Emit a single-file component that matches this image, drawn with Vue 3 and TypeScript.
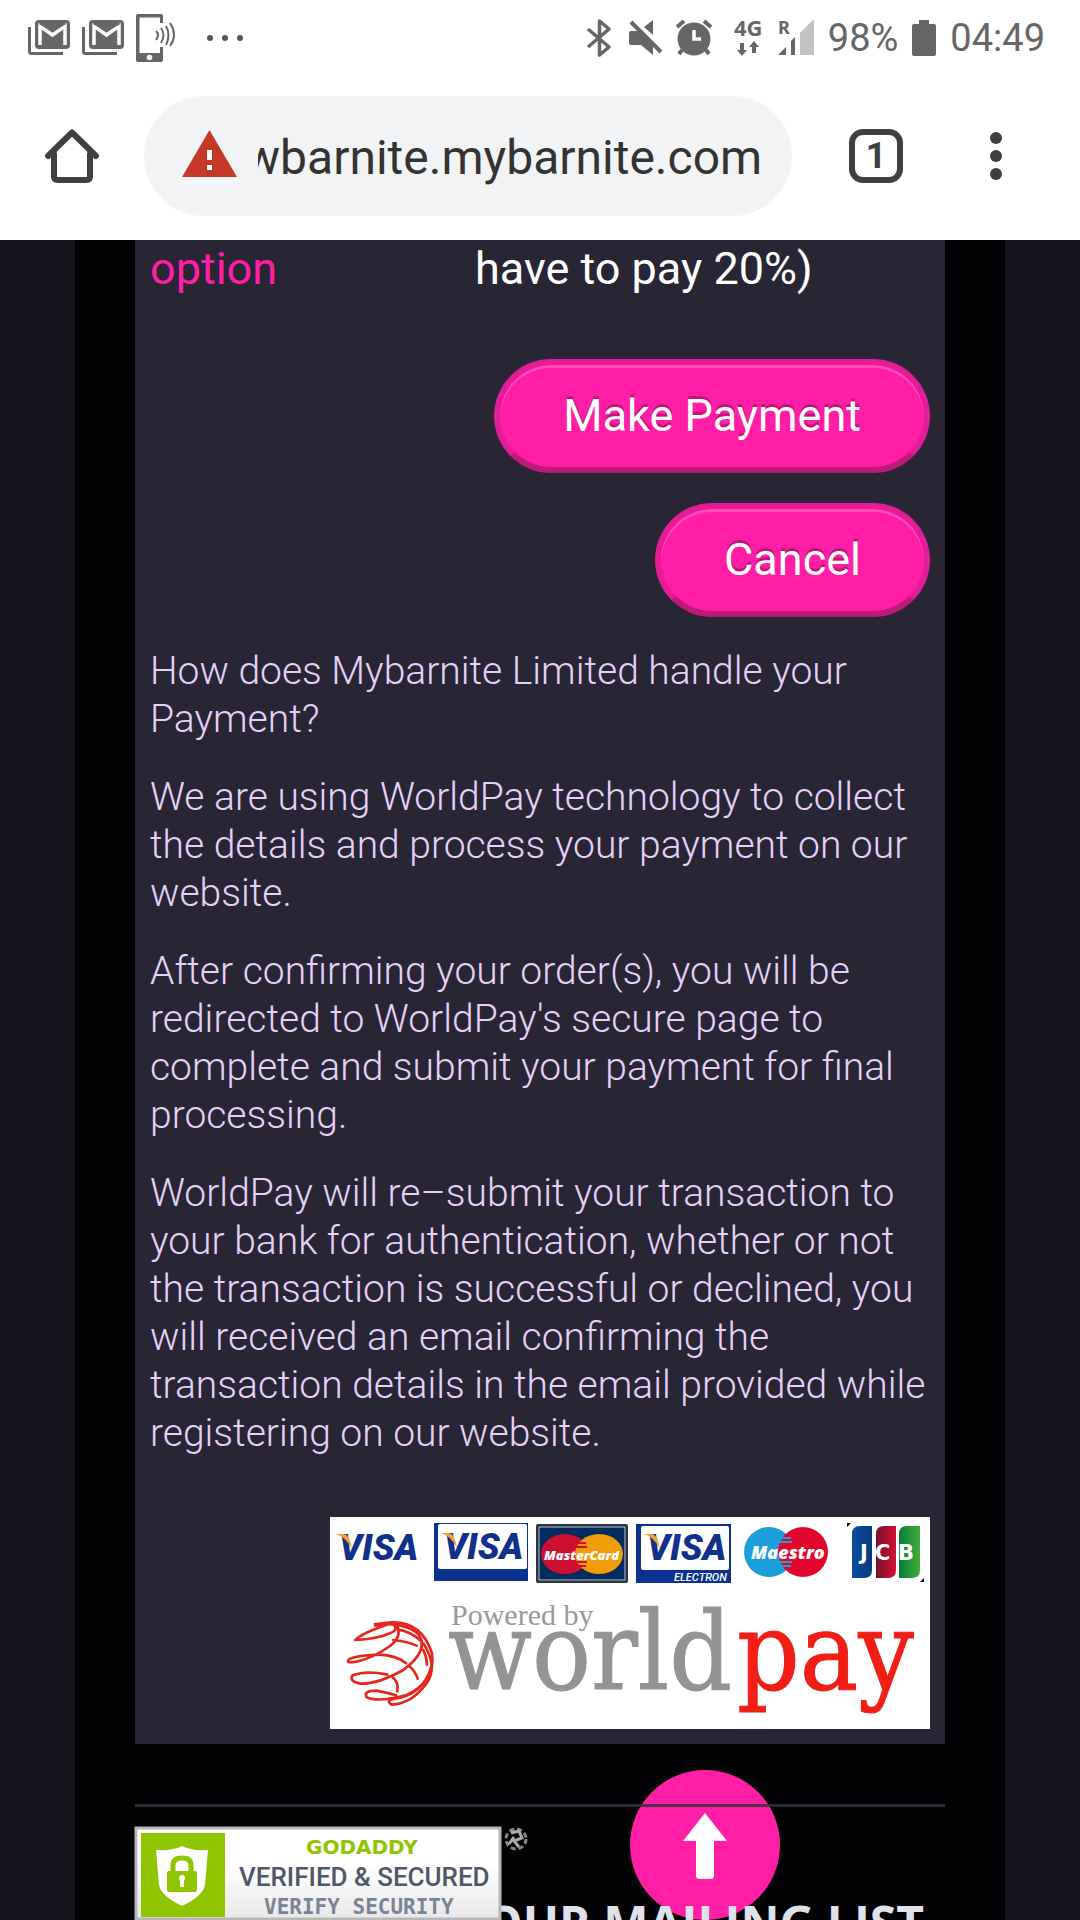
<script setup lang="ts">
import { ref } from 'vue'

const address = ref('wbarnite.mybarnite.com')
const openTabs = ref(1)

const paragraphs: string[] = [
  'How does Mybarnite Limited handle your Payment?',
  'We are using WorldPay technology to collect the details and process your payment on our website.',
  "After confirming your order(s), you will be redirected to WorldPay's secure page to complete and submit your payment for final processing.",
  'WorldPay will re–submit your transaction to your bank for authentication, whether or not the transaction is successful or declined, you will received an email confirming the transaction details in the email provided while registering on our website.',
]
</script>

<template>
  <div class="screen">
    <header class="browser">
      <div class="status">
        <div class="notifications">
          <svg v-for="n in 2" :key="n" width="42" height="36" viewBox="0 0 42 36" aria-label="Mail">
            <path d="M1.500 7V31.500Q1.500 33.500 3.500 33.500H35" fill="none" stroke="#666" stroke-width="3" />
            <rect x="7" y="0" width="35" height="29" rx="4" fill="#666" />
            <path d="M12 25V6L24.500 15L37 6V25" fill="none" stroke="#fff" stroke-width="3.500" />
            <path d="M10 3.500H39L24.500 12Z" fill="#666" />
          </svg>
          <svg width="39" height="48" viewBox="0 0 39 48" aria-label="Phone">
            <path d="M2 0H25Q27 0 27 2V9H24V3.500H3.500V39H24V33H27V46Q27 48 25 48H2Q0 48 0 46V2Q0 0 2 0Z" fill="#666" />
            <circle cx="13.500" cy="43.500" r="2.800" fill="#fff" />
            <path d="M20 17Q24 21 20 26M25 14Q30 21 25 29M30 12Q35 21 30 31M34 9Q42 21 34 32" fill="none" stroke="#666" stroke-width="2" />
          </svg>
          <svg class="more" width="36" height="8" viewBox="0 0 36 8" aria-label="More">
            <g fill="#555"><circle cx="3" cy="4" r="3" /><circle cx="18" cy="4" r="3" /><circle cx="33" cy="4" r="3" /></g>
          </svg>
        </div>
        <div class="indicators">
          <svg width="24" height="38" viewBox="0 0 24 38" aria-label="Bluetooth">
            <path d="M1 10L22 28L12.500 36V2L22 10L1 28" fill="none" stroke="#666" stroke-width="3.500" stroke-linejoin="round" />
          </svg>
          <svg class="mute" width="33" height="36" viewBox="0 0 33 36" aria-label="Muted">
            <path d="M2 11H9L24 26V35L12 25H2Q0 25 0 23V13Q0 11 2 11ZM24 0V15L15 7Z" fill="#666" />
            <path d="M2 2L32 32" stroke="#666" stroke-width="4" />
          </svg>
          <svg width="36" height="36" viewBox="0 0 36 36" aria-label="Alarm">
            <circle cx="18" cy="19" r="16.500" fill="#666" />
            <path d="M1 7L8 1M35 7L28 1" stroke="#666" stroke-width="4" />
            <path d="M6 30L3 34M30 30L33 34" stroke="#666" stroke-width="4" />
            <path d="M18 10V19H25" fill="none" stroke="#fff" stroke-width="3.500" />
          </svg>
          <svg class="network" width="30" height="38" viewBox="0 0 30 38">
            <text x="0" y="17" class="tiny">4G</text>
            <path d="M6 24H10V31H13L8 37L3 31H6ZM18 34H22V28H25L20 22L15 28H18Z" fill="#666" />
          </svg>
          <svg class="signal" width="36" height="38" viewBox="0 0 36 38">
            <text x="0" y="15" class="tiny">R</text>
            <path d="M0 36L8 28V36ZM13 22L17 18V36H13Z" fill="#666" />
            <path d="M22 36V14L36 0V36Z" fill="#c2c2c2" />
          </svg>
          <span class="reading">98%</span>
          <svg width="24" height="36" viewBox="0 0 24 36" aria-label="Battery">
            <path d="M7 0H17V4H22Q24 4 24 6V34Q24 36 22 36H2Q0 36 0 34V6Q0 4 2 4H7Z" fill="#666" />
          </svg>
          <time class="reading">04:49</time>
        </div>
      </div>

      <div class="toolbar">
        <button class="icon-button" type="button" aria-label="Home">
          <svg width="54" height="54" viewBox="0 0 54 54">
            <path d="M9 25V47.500Q9 51 12.500 51H41.500Q45 51 45 47.500V25M3 27L27 3.500L51 27" fill="none" stroke="#3c4043" stroke-width="6" stroke-linecap="round" stroke-linejoin="round" />
          </svg>
        </button>
        <label class="address">
          <svg class="warning" width="55" height="47" viewBox="0 0 55 47" aria-label="Not secure">
            <path d="M27.500 0L55 47H0Z" fill="#c53929" />
            <path d="M25 20H30V30H25ZM25 35H30V40H25Z" fill="#fff" />
          </svg>
          <input v-model="address" class="url" type="text" aria-label="Address" />
        </label>
        <div class="actions">
          <button class="tabs" type="button" aria-label="Open tabs">{{ openTabs }}</button>
          <button class="icon-button" type="button" aria-label="Menu">
            <svg width="12" height="48" viewBox="0 0 12 48">
              <g fill="#3c4043"><circle cx="6" cy="6" r="6" /><circle cx="6" cy="24" r="6" /><circle cx="6" cy="42" r="6" /></g>
            </svg>
          </button>
        </div>
      </div>
    </header>

    <main class="page">
      <div class="column">
        <section class="panel">
          <dl class="option">
            <dt>option</dt>
            <dd>have to pay 20%)</dd>
          </dl>
          <div class="buttons">
            <button class="pink" type="button">Make Payment</button>
            <button class="pink" type="button">Cancel</button>
          </div>
          <div class="info">
            <p v-for="text in paragraphs" :key="text">{{ text }}</p>
          </div>
          <svg class="cards" width="600" height="212" viewBox="0 0 600 212" aria-label="Accepted cards">
            <defs>
              <linearGradient id="jb"><stop offset="0" stop-color="#0c4da2" /><stop offset="1" stop-color="#063a7c" /></linearGradient>
              <linearGradient id="jr"><stop offset="0" stop-color="#75122b" /><stop offset="1" stop-color="#d50f35" /></linearGradient>
              <linearGradient id="jg"><stop offset="0" stop-color="#087b3c" /><stop offset="1" stop-color="#42ac3b" /></linearGradient>
            </defs>
            <rect width="600" height="212" fill="#fff" />

            <text class="visa" x="9" y="43">VISA</text>
            <path d="M6 17H14Q20 18 22 32Q16 20 6 17Z" fill="#f3a32d" />

            <rect x="104" y="6" width="94" height="58" fill="#0d3190" />
            <rect x="108" y="7" width="89" height="45" rx="2" fill="#fff" />
            <text class="visa" x="114" y="42">VISA</text>
            <path d="M111 16H119Q125 17 127 31Q121 19 111 16Z" fill="#f3a32d" />

            <rect x="207" y="8" width="90" height="57" rx="1" fill="#022c5e" stroke="#333" stroke-width="2" />
            <rect x="209" y="10" width="86" height="53" fill="none" stroke="#b9c3cf" stroke-width="1" />
            <ellipse cx="235" cy="37" rx="24" ry="20" fill="#ce0f2f" />
            <ellipse cx="269" cy="37" rx="24" ry="20" fill="#f09c0b" />
            <path d="M246 26H256M245 30H257M245 45H257M246 49H256" stroke="#ce0f2f" stroke-width="2" />
            <text class="master" x="214" y="43">MasterCard</text>

            <rect x="306" y="7" width="95" height="59" fill="#0d3190" />
            <rect x="311" y="9" width="88" height="44" rx="2" fill="#fff" />
            <text class="visa" x="317" y="43">VISA</text>
            <path d="M314 17H322Q328 18 330 32Q324 20 314 17Z" fill="#f3a32d" />
            <text class="electron" x="344" y="64">ELECTRON</text>

            <circle cx="439" cy="35" r="25" fill="#1a9fda" />
            <circle cx="473" cy="35" r="25" fill="#e2062c" />
            <path d="M451 21H461M449 25H462M449 45H462M451 49H461" stroke="#1a9fda" stroke-width="2" />
            <text class="maestro" x="421" y="42">Maestro</text>

            <path d="M517 6H521L517 10ZM594 61V65H590Z" fill="#000" />
            <path d="M530 9H542V53Q542 61 534 61H522V17Q522 9 530 9Z" fill="url(#jb)" />
            <path d="M554 9H566V53Q566 61 558 61H546V17Q546 9 554 9Z" fill="url(#jr)" />
            <path d="M577 9H590V53Q590 61 582 61H569V17Q569 9 577 9Z" fill="url(#jg)" />
            <g class="jcb"><text x="530" y="43">J</text><text x="545" y="43">C</text><text x="568" y="43">B</text></g>

            <g transform="translate(-20 -17) scale(.3333)" fill="none" stroke="#e8251b" stroke-width="8" stroke-linecap="round" stroke-linejoin="round">
              <path d="M195 376L230 374Q150 402 136 420Q200 418 240 400Q270 388 245 368M262 378Q276 410 240 438Q190 474 140 485Q112 490 114 482Q120 468 205 464" />
              <path d="M195 372Q290 368 325 402Q360 450 280 510Q205 552 150 551Q115 543 128 526Q170 510 232 524" />
              <path d="M205 372Q330 345 366 460Q378 545 290 585Q205 608 170 592Q158 572 200 572Q245 582 258 586" />
              <path d="M340 430Q385 500 350 550Q305 612 245 614Q226 602 250 597Q340 585 364 500" />
              <path d="M250 420Q295 425 320 437M340 450Q350 470 351 494M205 464Q260 466 288 490M300 500Q316 514 323 536M248 532Q268 550 262 574M262 388Q305 395 335 425" />
            </g>
            <text class="powered" x="121" y="108">Powered by</text>
            <text class="brand" x="118" y="172">world</text>
            <text class="brand pay" x="407" y="172">pay</text>
          </svg>
        </section>

        <footer class="footer">
          <hr class="rule" />
          <a class="badge" href="#" aria-label="Verify security">
            <svg width="394" height="93" viewBox="0 0 394 93">
              <defs>
                <linearGradient id="seal" x2="0" y2="1"><stop offset=".4" stop-color="#fff" /><stop offset="1" stop-color="#e8e8e8" /></linearGradient>
              </defs>
              <rect x="1" y="1" width="364" height="91" fill="url(#seal)" stroke="#b8b8b8" stroke-width="3" />
              <rect x="6" y="6" width="84" height="84" fill="#8fc400" />
              <path d="M21 23Q38 24 47 19Q56 24 73 23L70 58Q68 69 47 79Q26 69 24 58Z" fill="#fff" />
              <rect x="32" y="44" width="30" height="21" rx="2" fill="#8fc400" />
              <path d="M38 45V38Q38 31 47 31Q56 31 56 38V45" fill="none" stroke="#8fc400" stroke-width="5" />
              <circle cx="47" cy="51" r="3" fill="#fff" /><path d="M45 51H49V60H45Z" fill="#fff" />
              <text class="seal-name" x="171" y="27">GODADDY</text>
              <text class="seal-title" x="104" y="59">VERIFIED &amp; SECURED</text>
              <text class="seal-verify" x="129" y="87">VERIFY SECURITY</text>
              <g fill="none" stroke-width="3">
                <circle cx="381" cy="12" r="10" stroke="#888" stroke-dasharray="5 3" />
                <path d="M376 6L384 4L387 11L379 14L384 20M374 17L379 10" stroke="#aaa" />
              </g>
            </svg>
          </a>
          <h2 class="mailing">OUR MAILING LIST</h2>
        </footer>
      </div>
      <button class="to-top" type="button" aria-label="Back to top">
        <svg width="150" height="150" viewBox="0 0 150 150">
          <path d="M75 43L97 71H84V106Q84 109 80 109H70Q66 109 66 106V71H53Z" fill="#fff" />
        </svg>
      </button>
    </main>
  </div>
</template>

<style>
body {
  margin: 0;
  background: #16131d;
}
</style>

<style scoped>
.screen {
  display: flex;
  flex-direction: column;
  height: 100vh;
  overflow: hidden;
  font-family: Roboto, sans-serif;
}
button {
  margin: 0;
  padding: 0;
  border: 0;
  background: none;
  font-family: inherit;
}
svg {
  display: block;
  flex: none;
  overflow: visible;
}
.browser {
  flex: none;
  background: #fff;
}
.status {
  display: flex;
  justify-content: space-between;
  align-items: center;
  height: 75px;
  padding: 0 35px 0 28px;
}
.notifications,
.indicators {
  display: flex;
  align-items: center;
  gap: 12px;
}
.more {
  margin-left: 20px;
}
.indicators {
  gap: 14px;
}
.mute {
  margin-left: 4px;
}
.network {
  margin-left: 8px;
}
.tiny {
  font: bold 22px 'Noto Sans', sans-serif;
  fill: #666;
}
.signal .tiny {
  font-size: 18px;
}
.reading {
  color: #666;
  font-size: 38px;
  line-height: 72px;
}
.toolbar {
  display: flex;
  align-items: center;
  gap: 45px;
  padding: 21px 78px 24px 45px;
}
.address {
  display: flex;
  align-items: center;
  flex: 1;
  min-width: 0;
  height: 120px;
  gap: 21px;
  padding: 0 30px 0 38px;
  border-radius: 60px;
  box-sizing: border-box;
  background: #f1f3f4;
}
.warning {
  margin-bottom: 6px;
}
.url {
  flex: 1;
  min-width: 0;
  padding: 4px 0 0;
  border: 0;
  outline: 0;
  background: none;
  color: #333;
  font: 48px/60px Roboto, sans-serif;
  text-indent: -14px;
}
.actions {
  display: flex;
  align-items: center;
  gap: 87px;
  margin-left: 12px;
}
.tabs {
  width: 54px;
  height: 54px;
  border: 6px solid #3c4043;
  border-radius: 14px;
  color: #3c4043;
  font-size: 36px;
  font-weight: 700;
  line-height: 42px;
}
.page {
  position: relative;
  flex: 1;
  min-height: 0;
  overflow: hidden;
  padding: 0 75px;
  background: #16131d;
}
.column {
  min-height: 100%;
  padding: 0 60px;
  background: #030305;
}
.panel {
  display: flex;
  flex-direction: column;
  padding: 0 15px 15px;
  background: #282635;
}
.option {
  display: flex;
  margin: 0;
  font-size: 45px;
  line-height: 58px;
}
.option dt {
  width: 325px;
  color: #ff1ea5;
}
.option dd {
  margin: 0;
  color: #fff;
}
.buttons {
  display: flex;
  flex-direction: column;
  align-items: flex-end;
  gap: 30px;
  padding-top: 61px;
}
.pink {
  height: 114px;
  padding: 0 63px;
  border: 6px solid #e41c96;
  border-bottom-color: #bd187c;
  border-radius: 57px;
  background: #ff1ea5;
  box-shadow: inset 0 3px 0 rgba(255, 255, 255, 0.2);
  color: #fff;
  font-size: 45px;
  line-height: 60px;
  text-shadow: 0 -3px 0 rgba(0, 0, 0, 0.25);
}
.info {
  padding-top: 30px;
  color: #e6d0fa;
  font-size: 39px;
  font-weight: 300;
  line-height: 48px;
}
.info p {
  margin: 0 0 30px;
}
.cards {
  align-self: flex-end;
  margin-top: 30px;
}
.visa {
  font: italic 900 36px Roboto, sans-serif;
  fill: #10308c;
}
.master {
  font: italic 800 13px 'Open Sans', sans-serif;
  fill: #fff;
}
.electron {
  font: italic 500 11px Roboto, sans-serif;
  fill: #fff;
}
.maestro {
  font: italic 800 18px 'Open Sans', sans-serif;
  fill: #fff;
}
.jcb {
  font: bold 21px 'DejaVu Sans', sans-serif;
  fill: #fff;
}
.powered {
  font: 30px 'Liberation Serif', serif;
  fill: #999;
}
.brand {
  font: 109px 'DejaVu Serif Condensed', 'DejaVu Serif', serif;
  fill: #939393;
  stroke: #939393;
  stroke-width: 1px;
}
.pay {
  fill: #f01e14;
  stroke: #f01e14;
}
.footer {
  position: relative;
  z-index: 1;
  padding-top: 60px;
}
.rule {
  height: 3px;
  margin: 0 0 20px;
  border: 0;
  background: rgba(52, 49, 58, 0.85);
}
.badge {
  display: block;
  position: relative;
  z-index: 1;
  width: 394px;
}
.seal-name {
  font: bold 20px 'DejaVu Sans', sans-serif;
  fill: #8fc400;
}
.seal-title {
  font: 500 26px Roboto, sans-serif;
  fill: #4e5766;
}
.seal-verify {
  font: bold 21px 'DejaVu Sans Mono', monospace;
  fill: #7a8497;
}
.mailing {
  margin: -33px 21px 0 0;
  color: #dfe2ea;
  font: bold 48px/72px 'Open Sans', sans-serif;
  text-align: right;
  white-space: nowrap;
}
.to-top {
  position: absolute;
  right: 300px;
  bottom: 0;
  width: 150px;
  height: 150px;
  border-radius: 50%;
  background: #ff1ea5;
}
</style>
